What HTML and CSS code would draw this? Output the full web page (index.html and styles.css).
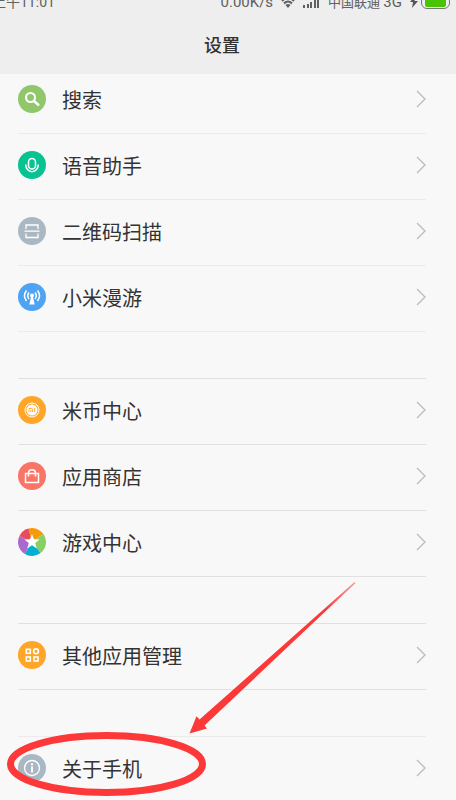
FILE: index.html
```html
<!DOCTYPE html>
<html lang="zh-CN">
<head>
<meta charset="utf-8">
<meta name="viewport" content="width=device-width, initial-scale=1">
<title>设置</title>
<link rel="stylesheet" href="styles.css">
</head>
<body>
<div class="screen">
  <header class="header">
    <div class="status">
      <span class="time">上午11:01</span>
      <span class="speed">0.00K/s</span>
      <svg class="wifi" width="14" height="12" viewBox="0 0 14 12" fill="none" stroke="#606060" stroke-width="2"><path d="M1 5Q7-1 13 5M3 7.500Q7 3.500 11 7.500"/><path d="M4.500 9Q7 7 9.500 9L7 12Z" fill="#606060" stroke="none"/></svg>
      <svg class="signal" width="17" height="12" viewBox="0 0 17 12" fill="#606060"><path d="M0 9h2v3H0zM4 8h2v4H4zM7 6h2v6H7zM11 3h2v9h-2zM14 0h2v12h-2z"/></svg>
      <span class="carrier">中国联通 <span class="network">3G</span></span>
      <svg class="bolt" width="8" height="12" viewBox="0 0 8 12" fill="#555"><path d="M5 0L0 6h3L2 12 8 5H4.500L6 0z"/></svg>
      <span class="battery"><span class="charge"></span></span>
    </div>
    <h1 class="title">设置</h1>
  </header>
  <main class="list">
    <ul class="group light">
      <li><a class="row" href="#">
        <svg class="icon" viewBox="0 0 28 28"><circle cx="14" cy="14" r="14" fill="#90c76a"/><g fill="none" stroke="#fff"><circle cx="12.500" cy="12.500" r="4.500" stroke-width="2"/><path d="M16 16l5 4.500" stroke-width="2.500"/></g></svg>
        <span class="label">搜索</span><svg class="chevron" viewBox="0 0 10 18"><path d="M1 1l8 8-8 8"/></svg></a></li>
      <li><a class="row" href="#">
        <svg class="icon" viewBox="0 0 28 28"><circle cx="14" cy="14" r="14" fill="#08c291"/><g fill="none" stroke="#fff" stroke-width="1.500"><rect x="10.500" y="7.500" width="7" height="10.500" rx="3.500"/><path d="M7.700 13.500c0 9.500 12.600 9.500 12.600 0" /></g></svg>
        <span class="label">语音助手</span><svg class="chevron" viewBox="0 0 10 18"><path d="M1 1l8 8-8 8"/></svg></a></li>
      <li><a class="row" href="#">
        <svg class="icon" viewBox="0 0 28 28"><circle cx="14" cy="14" r="14" fill="#aab8c3"/><path d="M8 12V8h12v4M8 16.500v4h12v-4M6.500 14.200h15" fill="none" stroke="#fff" stroke-width="1.300"/></svg>
        <span class="label">二维码扫描</span><svg class="chevron" viewBox="0 0 10 18"><path d="M1 1l8 8-8 8"/></svg></a></li>
      <li><a class="row" href="#">
        <svg class="icon" viewBox="0 0 28 28"><circle cx="14" cy="14" r="14" fill="#4ea3f2"/><g fill="none" stroke="#fff" stroke-width="1.500"><path d="M8.500 7.500q-4 5 0 10.500M11 9.500q-2.500 3.300 0 6.500M19.500 7.500q4 5 0 10.500M17 9.500q2.500 3.300 0 6.500"/></g><circle cx="14" cy="12.500" r="2" fill="#fff"/><path d="M13.300 13h1.400l2 8.500h-5.400z" fill="#fff"/></svg>
        <span class="label">小米漫游</span><svg class="chevron" viewBox="0 0 10 18"><path d="M1 1l8 8-8 8"/></svg></a></li>
    </ul>
    <ul class="group">
      <li><a class="row" href="#">
        <svg class="icon" viewBox="0 0 28 28"><circle cx="14" cy="14" r="14" fill="#ffa528"/><circle cx="14" cy="14" r="7" fill="none" stroke="#fff"/><circle cx="14" cy="14" r="5.500" fill="#fff"/><path d="M11 16v-3.500h2.500q1 0 1 1V16M12.800 14v2M16.600 12v4" fill="none" stroke="#ffa528" stroke-width=".9"/></svg>
        <span class="label">米币中心</span><svg class="chevron" viewBox="0 0 10 18"><path d="M1 1l8 8-8 8"/></svg></a></li>
      <li><a class="row" href="#">
        <svg class="icon" viewBox="0 0 28 28"><circle cx="14" cy="14" r="14" fill="#fa7566"/><path d="M7.500 11.500h13v9h-13zM10.500 14.500v-3q0-3.700 3.500-3.700t3.500 3.700v3" fill="none" stroke="#fff" stroke-width="1.500"/></svg>
        <span class="label">应用商店</span><svg class="chevron" viewBox="0 0 10 18"><path d="M1 1l8 8-8 8"/></svg></a></li>
      <li><a class="row" href="#">
        <svg class="icon" viewBox="0 0 28 28"><path d="M14 14L10.500.5A14 14 0 0 1 25.500 6z" fill="#f79a07"/><path d="M14 14L25.500 6A14 14 0 0 1 22.500 25.100z" fill="#88d064"/><path d="M14 14l8.500 11.100A14 14 0 0 1 6.500 25.800z" fill="#06aed3"/><path d="M14 14L6.500 25.800A14 14 0 0 1 1.300 8.200z" fill="#ab69cd"/><path d="M14 14L1.300 8.200A14 14 0 0 1 10.500.5z" fill="#e94d5b"/><path d="M14 6l2 5.300 5.600.2-4.400 3.500 1.600 5.500-4.800-3.200-4.800 3.200 1.600-5.500-4.400-3.500 5.600-.2z" fill="#fff"/></svg>
        <span class="label">游戏中心</span><svg class="chevron" viewBox="0 0 10 18"><path d="M1 1l8 8-8 8"/></svg></a></li>
    </ul>
    <ul class="group">
      <li><a class="row" href="#">
        <svg class="icon" viewBox="0 0 28 28"><circle cx="14" cy="14" r="14" fill="#ffa528"/><g fill="none" stroke="#fff" stroke-width="1.600"><rect x="8.300" y="8.300" width="4" height="4"/><circle cx="18" cy="10.300" r="2.400"/><rect x="8.300" y="16" width="4" height="4"/><rect x="16" y="16" width="4" height="4"/></g></svg>
        <span class="label">其他应用管理</span><svg class="chevron" viewBox="0 0 10 18"><path d="M1 1l8 8-8 8"/></svg></a></li>
    </ul>
    <ul class="group light">
      <li class="marked"><a class="row" href="#">
        <svg class="icon" viewBox="0 0 28 28"><circle cx="14" cy="14" r="14" fill="#aab8c3"/><circle cx="14" cy="14" r="7.500" fill="none" stroke="#fff" stroke-width="1.300"/><path d="M13 9.200h2v2h-2zM13 12.500h2v6h-2z" fill="#fff"/></svg>
        <span class="label">关于手机</span><svg class="chevron" viewBox="0 0 10 18"><path d="M1 1l8 8-8 8"/></svg></a>
        <svg class="annotation" width="360" height="220" viewBox="0 580 360 220" aria-hidden="true">
          <defs><linearGradient id="fade" gradientUnits="userSpaceOnUse" x1="355" y1="582" x2="325" y2="609"><stop offset="0" stop-color="#fd3838" stop-opacity=".5"/><stop offset="1" stop-color="#fd3838"/></linearGradient></defs>
          <ellipse cx="106.500" cy="764" rx="96" ry="28.500" fill="none" stroke="#fd3838" stroke-width="7"/>
          <path d="M189.500 733.500l7-17.200 3 3.300L354.500 582l1 1L204.500 725.500l2.500 3z" fill="url(#fade)"/>
        </svg></li>
    </ul>
  </main>
</div>
</body>
</html>
```
FILE: styles.css
```css
* {
  box-sizing: border-box;
}

body {
  margin: 0;
  background: #f8f8f8;
  color: #333;
  font-family: Roboto, "Noto Sans CJK SC", sans-serif;
}

.screen {
  height: 100vh;
  overflow: hidden;
}

.header {
  position: relative;
  z-index: 1;
  height: 74px;
  overflow: hidden;
  background: #eee;
}

/* The status bar is partly scrolled off the top edge. */
.status {
  display: flex;
  align-items: center;
  height: 20px;
  margin: -8px 6px 0 -8px;
  color: #606060;
  font-size: 15px;
  line-height: 20px;
  white-space: nowrap;
}

.time {
  font-size: 14px;
}

.speed {
  margin-left: auto;
}

.wifi {
  margin-left: 8px;
}

.signal {
  margin: 0 8px 0 8px;
}

.carrier {
  font-size: 13px;
}

.network {
  font-size: 15px;
}

.bolt {
  margin: 0 3px 0 8px;
}

.battery {
  width: 29px;
  height: 14px;
  padding: 1px 3px;
  border: 1px solid #777;
  border-radius: 6px;
}

.charge {
  display: block;
  height: 10px;
  border-radius: 2px;
  background: #48c400;
}

.title {
  margin: 21px 12px 0 0;
  font-size: 18px;
  font-weight: 500;
  line-height: 26px;
  text-align: center;
}

.list {
  margin-top: -6px;
  padding: 0 30px 0 18px;
}

.group {
  margin: 0 0 46px;
  padding: 0;
  list-style: none;
}

.group + .group {
  border-top: 1px solid #e0e0e0;
}

.row {
  display: flex;
  align-items: center;
  height: 66px;
  padding-bottom: 3px;
  border-bottom: 1px solid #e0e0e0;
  color: inherit;
  text-decoration: none;
}

.group.light,
.light .row {
  border-color: #ebebeb;
}

.icon {
  width: 28px;
  height: 28px;
  margin-right: 16px;
}

.label {
  flex: 1;
  padding-top: 4px;
  font-size: 20px;
  line-height: 30px;
}

.chevron {
  width: 10px;
  height: 18px;
  fill: none;
  stroke: #bbb;
  stroke-width: 1.300;
}

.marked {
  position: relative;
}

.annotation {
  position: absolute;
  left: -18px;
  bottom: 3px;
  pointer-events: none;
}
```
